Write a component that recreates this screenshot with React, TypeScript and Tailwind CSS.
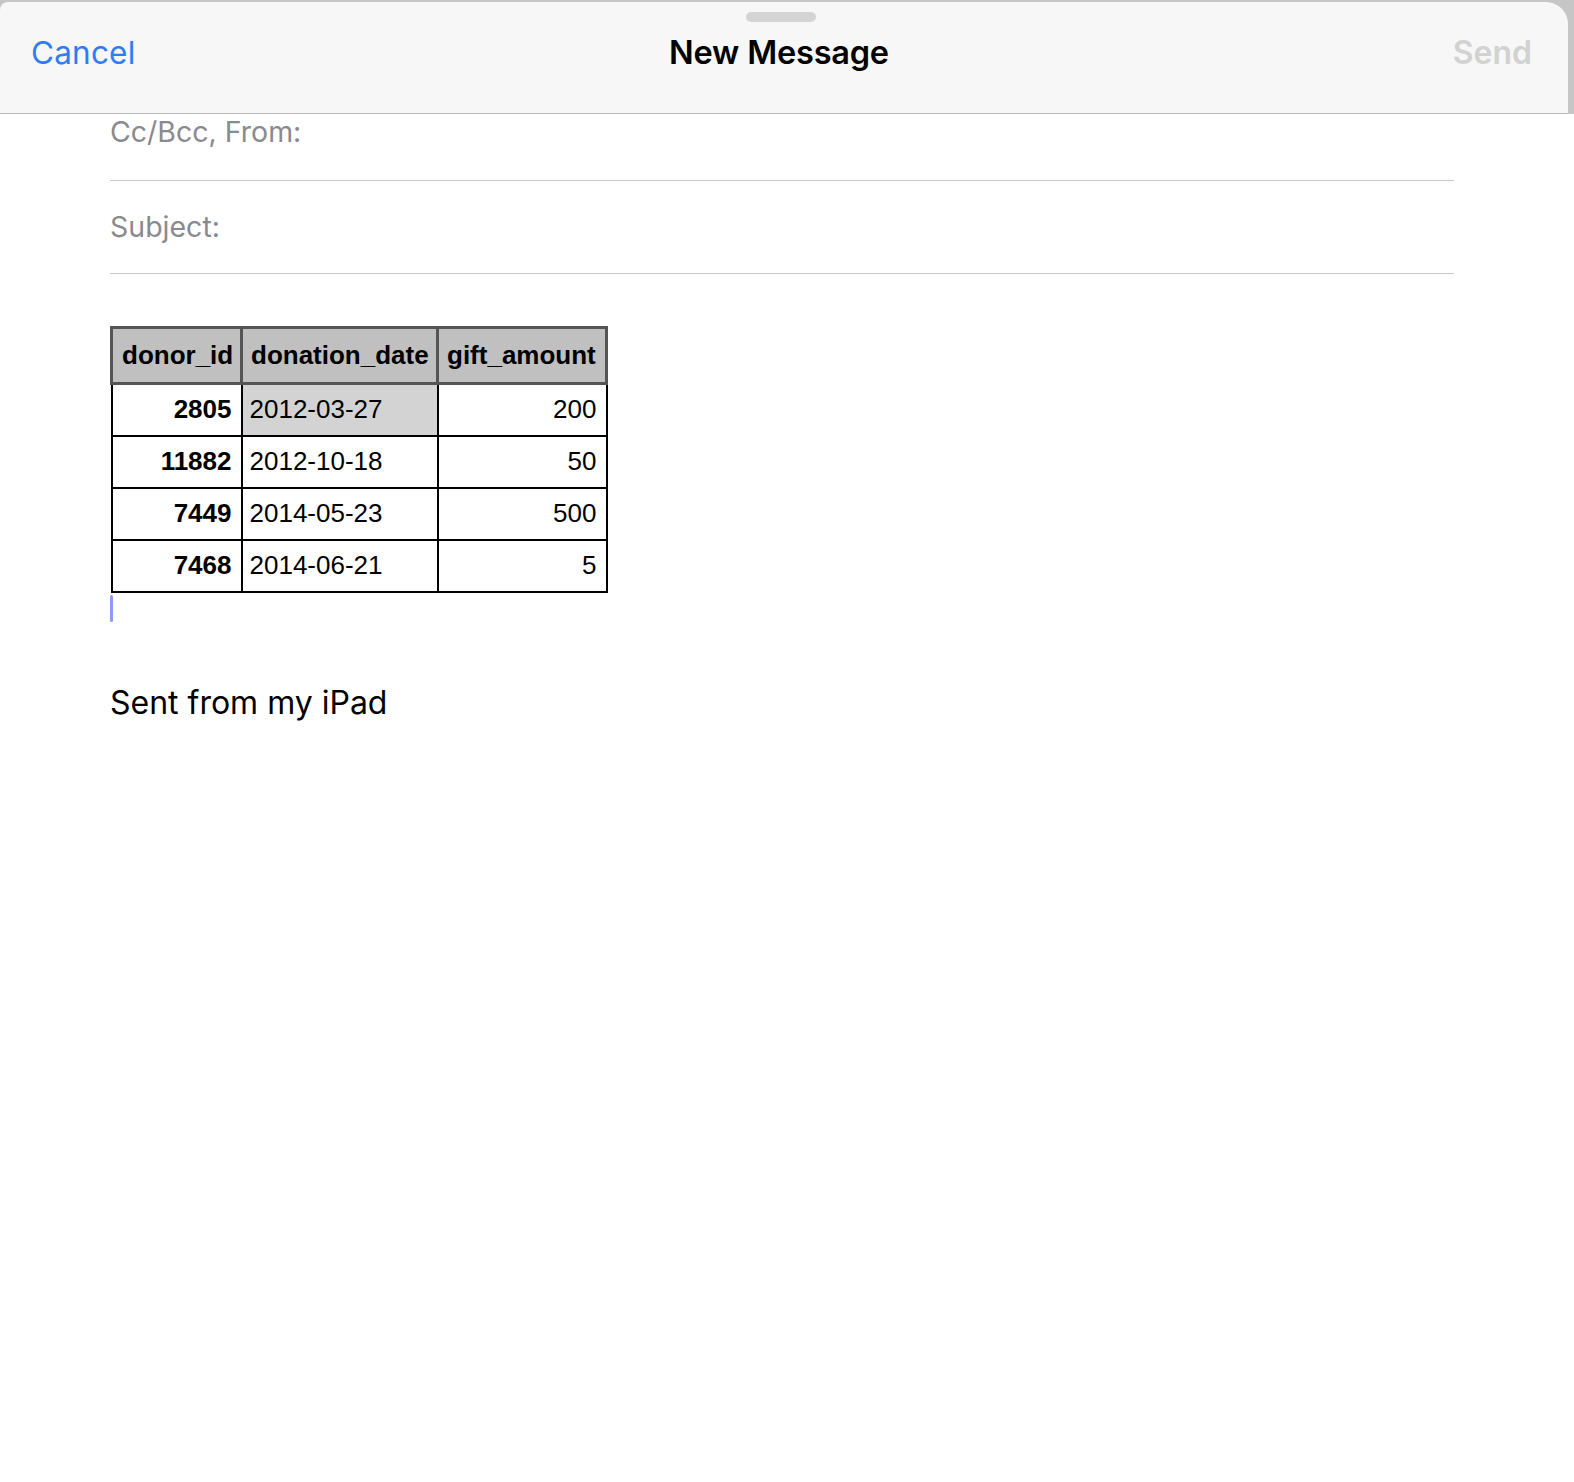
const rows = [
  { id: '2805', date: '2012-03-27', amount: '200', selected: true },
  { id: '11882', date: '2012-10-18', amount: '50' },
  { id: '7449', date: '2014-05-23', amount: '500' },
  { id: '7468', date: '2014-06-21', amount: '5' },
];

export default function App() {
  return (
    <div className="min-h-screen bg-white font-['Inter','Noto_Sans',sans-serif]">
      {/* sheet header */}
      <div className="bg-[#c6c6c6] pt-[2px] pr-[6px]">
        <div className="relative h-[112px] rounded-tl-[8px] rounded-tr-[22px] bg-[#f7f7f7] border-b border-[#b9b9b9] flex items-center justify-between pl-[31px] pr-[36px]">
          <div className="absolute left-[746px] top-[10px] w-[70px] h-[10px] rounded-full bg-[#d4d4d4]" />
          <button className="text-[31.5px] text-[#2f7cf6] tracking-[0.2px] -mt-[10px]">Cancel</button>
          <h1 className="absolute left-[779px] top-[27px] -translate-x-1/2 text-[32.5px] font-semibold text-black tracking-[-0.2px]">
            New Message
          </h1>
          <button className="text-[32px] font-semibold text-[#d2d2d2] -mt-[10px]">Send</button>
        </div>
      </div>

      <div className="pl-[110px] pr-[120px]">
        <div className="h-[67px] border-b border-[#c8c8c8] text-[28.5px] text-[#8a8a8e] leading-none pt-[4px]">
          Cc/Bcc, From:
        </div>
        <div className="h-[93px] border-b border-[#c8c8c8] flex items-center text-[28.5px] text-[#8a8a8e]">
          Subject:
        </div>

        <table className="mt-[52px] table-fixed w-[495px] border-collapse font-['Liberation_Sans','Arial',sans-serif] text-[26px] text-black">
          <thead>
            <tr className="bg-[#c0c0c0] h-[56px]">
              <th className="w-[130px] border-[3px] border-[#555555] pl-[9px] pr-0 font-bold text-left whitespace-nowrap">donor_id</th>
              <th className="w-[196px] border-[3px] border-[#555555] pl-[8px] pr-0 font-bold text-left whitespace-nowrap">donation_date</th>
              <th className="w-[169px] border-[3px] border-[#555555] pl-[8px] pr-0 font-bold text-left whitespace-nowrap">gift_amount</th>
            </tr>
          </thead>
          <tbody>
            {rows.map(r => (
              <tr key={r.id} className="h-[52px]">
                <td className="border-2 border-black px-[9px] text-right font-bold">{r.id}</td>
                <td className={`border-2 border-black px-[7px] text-left ${r.selected ? 'bg-[#d3d3d3]' : ''}`}>{r.date}</td>
                <td className="border-2 border-black px-[9px] text-right">{r.amount}</td>
              </tr>
            ))}
          </tbody>
        </table>

        <div className="mt-[2px] w-[3px] h-[27px] rounded-sm bg-[#8c9cf2]" />

        <p className="mt-[57px] text-[32px] text-black">Sent from my iPad</p>
      </div>
    </div>
  );
}
